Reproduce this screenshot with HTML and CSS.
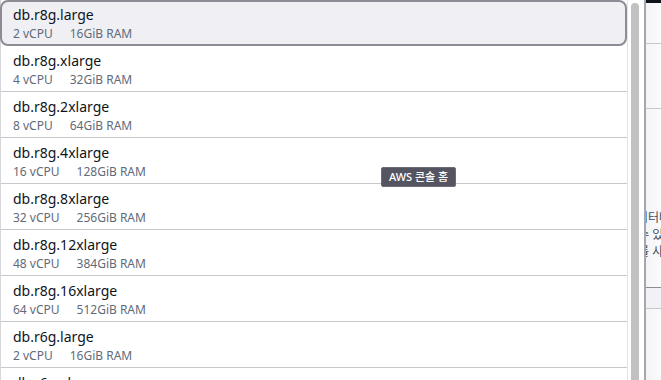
FILE: index.html
```html
<!DOCTYPE html>
<html lang="ko">
<head>
    <meta charset="UTF-8">
    <title>Instance class</title>
    <link rel="stylesheet" href="styles.css">
</head>
<body>
    <div class="screen">
        <ul class="options">
            <li class="option selected">
                <div class="name">db.r8g.large</div>
                <div class="specs"><span>2 vCPU</span><span>16GiB RAM</span></div>
            </li>
            <li class="option">
                <div class="name">db.r8g.xlarge</div>
                <div class="specs"><span>4 vCPU</span><span>32GiB RAM</span></div>
            </li>
            <li class="option">
                <div class="name">db.r8g.2xlarge</div>
                <div class="specs"><span>8 vCPU</span><span>64GiB RAM</span></div>
            </li>
            <li class="option">
                <div class="name">db.r8g.4xlarge</div>
                <div class="specs"><span>16 vCPU</span><span>128GiB RAM</span></div>
            </li>
            <li class="option">
                <div class="name">db.r8g.8xlarge</div>
                <div class="specs"><span>32 vCPU</span><span>256GiB RAM</span></div>
            </li>
            <li class="option">
                <div class="name">db.r8g.12xlarge</div>
                <div class="specs"><span>48 vCPU</span><span>384GiB RAM</span></div>
            </li>
            <li class="option">
                <div class="name">db.r8g.16xlarge</div>
                <div class="specs"><span>64 vCPU</span><span>512GiB RAM</span></div>
            </li>
            <li class="option">
                <div class="name">db.r6g.large</div>
                <div class="specs"><span>2 vCPU</span><span>16GiB RAM</span></div>
            </li>
            <li class="option">
                <div class="name">db.r6g.xlarge</div>
                <div class="specs"><span>4 vCPU</span><span>32GiB RAM</span></div>
            </li>
        </ul>
        <div class="scrollbar">
            <div class="thumb"></div>
        </div>
        <div class="behind">
            <div class="topbar"></div>
            <div class="panel-head"></div>
            <div class="panel-row"></div>
            <div class="panel-text">
                <p>데이터베이스</p>
                <p>할 수 있</p>
                <p>스를 사용</p>
            </div>
            <div class="panel-tab"></div>
            <div class="panel-tab plain"></div>
        </div>
        <div class="tooltip">AWS 콘솔 홈</div>
    </div>
</body>
</html>
```

FILE: styles.css
```css
body {
    margin: 0;
    font-family: "Noto Sans", "Noto Sans CJK KR", sans-serif;
    background-color: #ffffff;
    color: #0f141a;
}

.screen {
    position: relative;
    display: flex;
    width: 661px;
    height: 380px;
    overflow: hidden;
}

.options {
    list-style: none;
    margin: 0;
    padding: 0;
    width: 626px;
    border-left: 1px solid #d6d6db;
    border-right: 1px solid #e4e4e8;
    flex-shrink: 0;
}

.option {
    height: 45px;
    padding: 0 12px;
    border-bottom: 1px solid #c6c6cd;
    box-sizing: content-box;
}

.option.selected {
    height: 42px;
    padding: 0 11px;
    margin-left: -1px;
    border: 2px solid #8c8c94;
    border-radius: 8px;
    background-color: #f0f0f4;
}

.name {
    padding-top: 5px;
    font-size: 14px;
    line-height: 20px;
}

.selected .name {
    padding-top: 3px;
}

.specs {
    margin-top: 1px;
    font-size: 12px;
    line-height: 16px;
    color: #5f6b7a;
}

.specs span {
    margin-right: 17px;
}

.scrollbar {
    width: 12px;
    padding: 3px 1px 0 3px;
    border-right: 2px solid #a7a6ae;
    flex-shrink: 0;
}

.thumb {
    height: 100%;
    background-color: #c1c1c1;
    border-radius: 4px 4px 0 0;
    width: 8px;
}

.behind {
    flex: 1;
    background: linear-gradient(to right, #f4f4f6, #fbfbfc);
    overflow: hidden;
}

.topbar {
    height: 3px;
    background-color: #0f141a;
}

.panel-head {
    height: 40px;
    border-bottom: 1px solid #c6c6cd;
}

.panel-row {
    height: 64px;
    border-bottom: 1px solid #c6c6cd;
}

.panel-text {
    height: 178px;
    padding-top: 100px;
    box-sizing: border-box;
    font-size: 12px;
    line-height: 17px;
    color: #414d5c;
}

.panel-text p {
    margin: 0;
    white-space: nowrap;
    margin-left: -20px;
}

.panel-text p:nth-child(2) {
    margin-left: -22px;
}

.panel-text p:nth-child(3) {
    margin-left: -19px;
}

.panel-tab {
    height: 20px;
    border-top: 1px solid #8c8c94;
    background-color: #f1f1f6;
}

.panel-tab.plain {
    border-top: 1px solid #c6c6cd;
    background-color: transparent;
}

.tooltip {
    position: absolute;
    left: 381px;
    top: 167px;
    width: 73px;
    height: 18px;
    border: 1px solid #6c6c74;
    border-radius: 2px;
    background-color: #545560;
    color: #ffffff;
    font-size: 11px;
    font-weight: 500;
    line-height: 18px;
    text-align: center;
}
```
